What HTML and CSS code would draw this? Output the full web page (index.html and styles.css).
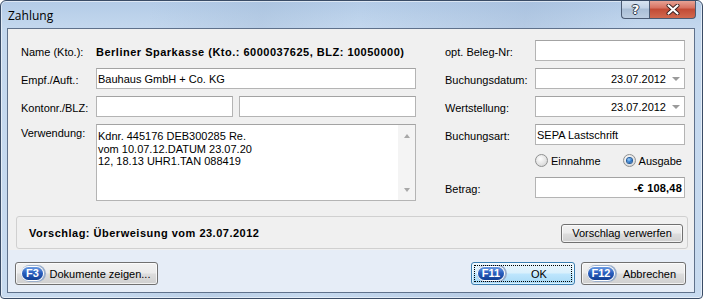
FILE: index.html
```html
<!DOCTYPE html>
<html>
<head>
<meta charset="utf-8">
<title>Zahlung</title>
<link rel="stylesheet" href="styles.css">
</head>
<body>
<div class="window">
  <div class="titlebar">
    <span class="title">Zahlung</span>
    <div class="caption">
      <span class="cap-btn help">?</span>
      <span class="cap-btn close">
        <svg width="14" height="11" viewBox="0 0 14 11">
          <path d="M2.5 1.5 L11.5 9.5 M11.5 1.5 L2.5 9.5" stroke="#3b2020" stroke-width="4" stroke-linecap="round"/>
          <path d="M2.5 1.5 L11.5 9.5 M11.5 1.5 L2.5 9.5" stroke="#ffffff" stroke-width="2.2" stroke-linecap="round"/>
        </svg>
      </span>
    </div>
  </div>
  <div class="client">
    <div class="content">
      <div class="fields">
        <div class="grid grid-left">
          <span class="label">Name (Kto.):</span>
          <span class="static">Berliner Sparkasse (Kto.: 6000037625, BLZ: 10050000)</span>

          <span class="label">Empf./Auft.:</span>
          <div class="input">Bauhaus GmbH + Co. KG</div>

          <span class="label">Kontonr./BLZ:</span>
          <div class="pair">
            <div class="input kto"></div>
            <div class="input blz"></div>
          </div>

          <span class="label label-top">Verwendung:</span>
          <div class="input memo">
            <div class="memo-text">Kdnr. 445176 DEB300285 Re.<br>vom 10.07.12.DATUM 23.07.20<br>12, 18.13 UHR1.TAN 088419</div>
            <div class="scrollbar">
              <span class="arrow-up"></span>
              <span class="arrow-down"></span>
            </div>
          </div>
        </div>

        <div class="grid grid-right">
          <span class="label">opt. Beleg-Nr:</span>
          <div class="input"></div>

          <span class="label">Buchungsdatum:</span>
          <div class="input date"><span class="date-val">23.07.2012</span><span class="drop"></span></div>

          <span class="label">Wertstellung:</span>
          <div class="input date"><span class="date-val">23.07.2012</span><span class="drop"></span></div>

          <span class="label">Buchungsart:</span>
          <div class="input">SEPA Lastschrift</div>

          <span></span>
          <div class="radios">
            <span class="radio-item"><span class="radio"></span>Einnahme</span>
            <span class="radio-item"><span class="radio checked"></span>Ausgabe</span>
          </div>

          <span class="label">Betrag:</span>
          <div class="input amount">-€ 108,48</div>
        </div>
      </div>

      <div class="group">
        <span class="group-text">Vorschlag: Überweisung vom 23.07.2012</span>
        <span class="btn btn-small">Vorschlag verwerfen</span>
      </div>
    </div>

    <div class="footer">
      <span class="btn btn-docs"><span class="fkey">F3</span><span class="btn-text">Dokumente zeigen...</span></span>
      <div class="footer-right">
        <span class="btn btn-ok default"><span class="fkey wide">F11</span><span class="btn-text">OK</span></span>
        <span class="btn btn-cancel"><span class="fkey wide">F12</span><span class="btn-text">Abbrechen</span></span>
      </div>
    </div>
  </div>
</div>
</body>
</html>
```

FILE: styles.css
```css
html, body {
  margin: 0;
  padding: 0;
  background: #ffffff;
}

body {
  font-family: "Liberation Sans", Arial, sans-serif;
  font-size: 11px;
  color: #000;
}

.window {
  width: 703px;
  height: 299px;
  box-sizing: border-box;
  border: 1px solid #3a4c66;
  border-radius: 6px 6px 4px 4px;
  background:
    linear-gradient(100deg, rgba(255,255,255,0) 20%, rgba(150,175,205,0.25) 35%, rgba(255,255,255,0) 48%, rgba(140,165,200,0.25) 70%, rgba(255,255,255,0) 85%),
    linear-gradient(180deg, #b3cbe7 0px, #c4d8ee 28px, #c7daef 100%);
  box-shadow: inset 0 0 0 1px rgba(255,255,255,0.55);
  display: flex;
  flex-direction: column;
  overflow: hidden;
}

.titlebar {
  height: 27px;
  display: flex;
  justify-content: space-between;
  align-items: flex-start;
  flex-shrink: 0;
}

.title {
  font-family: "Open Sans", "Liberation Sans", sans-serif;
  font-size: 12px;
  color: #000;
  margin: 7px 0 0 7px;
  line-height: 16px;
}

.caption {
  display: flex;
  margin-top: -1px;
  margin-right: 6px;
}

.cap-btn {
  height: 19px;
  box-sizing: border-box;
  display: flex;
  align-items: center;
  justify-content: center;
  border: 1px solid #4b5b73;
  border-top: none;
}

.help {
  width: 28px;
  border-radius: 0 0 0 4px;
  border-right: none;
  background: linear-gradient(180deg, #dbe6f2 0%, #c3d3e6 45%, #a9bed6 50%, #bccde1 100%);
  color: #ffffff;
  font-family: "DejaVu Sans", sans-serif;
  font-weight: bold;
  font-size: 13px;
  text-shadow: 1px 0 0 #2d3a4c, -1px 0 0 #2d3a4c, 0 1px 0 #2d3a4c, 0 -1px 0 #2d3a4c;
}

.close {
  width: 47px;
  border-radius: 0 0 4px 0;
  background: linear-gradient(180deg, #e9a99c 0%, #d7705f 45%, #c24a35 50%, #d1694f 100%);
}

.client {
  margin: 0 7px 5px 6px;
  border: 1px solid #5f718b;
  display: flex;
  flex-direction: column;
  height: 265px;
  box-sizing: border-box;
}

.content {
  height: 221px;
  background: #f0f0f0;
  padding-top: 11px;
  box-sizing: border-box;
  display: flex;
  flex-direction: column;
}

.fields {
  display: flex;
  gap: 29px;
  padding: 0 9px 0 13px;
}

.grid {
  display: grid;
  row-gap: 7px;
}

.grid-left {
  grid-template-columns: 75px 320px;
  grid-template-rows: 21px 21px 21px 77px;
  row-gap: 7px;
}

.grid-right {
  grid-template-columns: 90px 150px;
  grid-template-rows: 21px 21px 21px 20px 19px 21px;
  row-gap: 7px;
}

.label {
  align-self: center;
  padding-top: 3px;
  white-space: nowrap;
}

.label-top {
  align-self: start;
  padding-top: 3px;
}

.static {
  align-self: center;
  padding-top: 3px;
  font-weight: bold;
  letter-spacing: 0.5px;
  white-space: nowrap;
}

.input {
  box-sizing: border-box;
  height: 21px;
  border: 1px solid #b4b4b4;
  border-top-color: #a3a3a3;
  background: #ffffff;
  display: flex;
  align-items: center;
  padding: 0 2px 0 1px;
  white-space: nowrap;
}

.pair {
  display: flex;
  gap: 6px;
}

.kto { width: 137px; }
.blz { width: 177px; }

.memo {
  height: 77px;
  align-items: stretch;
  padding: 0 0 0 1px;
}

.memo-text {
  flex: 1;
  padding-top: 5px;
  line-height: 12.5px;
}

.scrollbar {
  width: 17px;
  background: #f4f4f4;
  display: flex;
  flex-direction: column;
  justify-content: space-between;
  align-items: center;
  padding: 9px 0 8px;
  box-sizing: border-box;
}

.arrow-up {
  width: 0;
  height: 0;
  border-left: 3.5px solid transparent;
  border-right: 3.5px solid transparent;
  border-bottom: 4px solid #a8a8a8;
}

.arrow-down {
  width: 0;
  height: 0;
  border-left: 3.5px solid transparent;
  border-right: 3.5px solid transparent;
  border-top: 4px solid #a8a8a8;
}

.date {
  justify-content: flex-end;
  padding-right: 4px;
}

.date-val {
  margin-right: 6px;
}

.drop {
  width: 0;
  height: 0;
  border-left: 4px solid transparent;
  border-right: 4px solid transparent;
  border-top: 4px solid #9a9a9a;
  margin-top: 1px;
}

.amount {
  justify-content: flex-end;
  font-weight: bold;
  letter-spacing: 0.2px;
  padding-right: 2px;
}

.radios {
  display: flex;
  align-items: center;
  gap: 22px;
}

.radio-item {
  display: flex;
  align-items: center;
  gap: 3px;
}

.radio {
  width: 13px;
  height: 13px;
  box-sizing: border-box;
  border-radius: 50%;
  border: 1px solid #8f9090;
  background: radial-gradient(circle at 40% 35%, #fdfdfd 0%, #e4e4e4 55%, #c9c9c9 100%);
  display: inline-flex;
  align-items: center;
  justify-content: center;
}

.radio.checked::after {
  content: "";
  width: 5px;
  height: 5px;
  border-radius: 50%;
  background: radial-gradient(circle at 40% 35%, #9fd4ff 0%, #2c76c8 55%, #174a8a 100%);
  box-shadow: 0 0 0 1px #235a99;
}

.group {
  margin: 15px 6px 0 8px;
  height: 33px;
  box-sizing: border-box;
  border: 1px solid #d0d0d0;
  border-radius: 3px;
  display: flex;
  align-items: center;
  justify-content: space-between;
  padding: 0 4px 0 12px;
}

.group-text {
  font-weight: bold;
  letter-spacing: 0.5px;
  padding-top: 1px;
}

.btn {
  box-sizing: border-box;
  border: 1px solid #707070;
  border-radius: 3px;
  background: linear-gradient(180deg, #f2f2f2 0%, #ebebeb 48%, #dddddd 52%, #cfcfcf 100%);
  box-shadow: inset 0 0 0 1px rgba(255,255,255,0.7);
  display: inline-flex;
  align-items: center;
  white-space: nowrap;
}

.btn-small {
  width: 122px;
  height: 19px;
  justify-content: center;
  margin-top: 1px;
}

.footer {
  flex: 1;
  background: #e6edf7;
  display: flex;
  justify-content: space-between;
  align-items: flex-start;
  padding: 12px 8px 0 7px;
}

.footer-right {
  display: flex;
  gap: 6px;
}

.btn-docs { width: 143px; height: 23px; padding-left: 6px; }
.btn-ok { width: 104px; height: 23px; padding-left: 6px; }
.btn-cancel { width: 105px; height: 23px; padding-left: 6px; }

.btn-text {
  flex: 1;
  text-align: center;
}

.btn.default {
  border-color: #3c7fb1;
  background: linear-gradient(180deg, #eaf6fd 0%, #d9f0fc 48%, #bee6fd 52%, #a7d9f5 100%);
  box-shadow: inset 0 0 0 1px rgba(255,255,255,0.6);
  position: relative;
}

.btn.default::after {
  content: "";
  position: absolute;
  left: 2px;
  top: 2px;
  right: 2px;
  bottom: 2px;
  border: 1px dotted #000;
}

.fkey {
  display: inline-flex;
  align-items: center;
  justify-content: center;
  height: 13px;
  min-width: 21px;
  padding: 0 3px;
  box-sizing: border-box;
  border-radius: 7px;
  background: linear-gradient(180deg, #6b9be3 0%, #2a5fbf 45%, #123f93 100%);
  color: #ffffff;
  font-weight: bold;
  font-size: 11px;
  line-height: 13px;
  box-shadow: 0 0 0 1px #ffffff, 1px 0 0 2px #9aaecb;
}

.fkey.wide {
  min-width: 26px;
}
```
